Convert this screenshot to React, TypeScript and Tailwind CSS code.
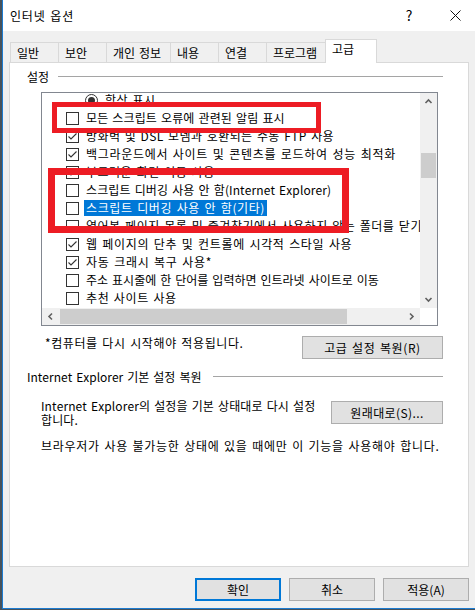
import React from 'react';

type Item = { label: string; kind: 'check' | 'radio'; checked: boolean; selected?: boolean; track: string };

const items: Item[] = [
  { label: '항상 표시', kind: 'radio', checked: true, track: 'tracking-[0.5px]' },
  { label: '모든 스크립트 오류에 관련된 알림 표시', kind: 'check', checked: false, track: 'tracking-[0.1px]' },
  { label: '방화벽 및 DSL 모뎀과 호환되는 수동 FTP 사용', kind: 'check', checked: true, track: 'tracking-[0.4px]' },
  { label: '백그라운드에서 사이트 및 콘텐츠를 로드하여 성능 최적화', kind: 'check', checked: true, track: 'tracking-[0.7px]' },
  { label: '부드러운 화면 이동 사용', kind: 'check', checked: true, track: 'tracking-[0.5px]' },
  { label: '스크립트 디버깅 사용 안 함(Internet Explorer)', kind: 'check', checked: false, track: 'tracking-[0.1px]' },
  { label: '스크립트 디버깅 사용 안 함(기타)', kind: 'check', checked: false, selected: true, track: 'tracking-[0.6px]' },
  { label: '열어본 페이지 목록 및 즐겨찾기에서 사용하지 않는 폴더를 닫기', kind: 'check', checked: false, track: 'tracking-[0.5px]' },
  { label: '웹 페이지의 단추 및 컨트롤에 시각적 스타일 사용', kind: 'check', checked: true, track: 'tracking-[0.65px]' },
  { label: '자동 크래시 복구 사용*', kind: 'check', checked: true, track: 'tracking-[0.7px]' },
  { label: '주소 표시줄에 한 단어를 입력하면 인트라넷 사이트로 이동', kind: 'check', checked: false, track: 'tracking-[0px]' },
  { label: '추천 사이트 사용', kind: 'check', checked: false, track: 'tracking-[0.6px]' },
];

const tabs = [
  { label: '일반', w: 'w-[48px]' },
  { label: '보안', w: 'w-[48px]' },
  { label: '개인 정보', w: 'w-[64px]' },
  { label: '내용', w: 'w-[48px]' },
  { label: '연결', w: 'w-[48px]' },
  { label: '프로그램', w: 'w-[59px]' },
];

function CheckBox({ checked }: { checked: boolean }) {
  return (
    <span className="w-[13px] h-[13px] border border-[#333333] bg-white flex items-center justify-center shrink-0">
      {checked && (
        <svg width="11" height="11" viewBox="0 0 11 11">
          <path d="M1.5 5.5 L4 8 L9.5 2.5" fill="none" stroke="#333333" strokeWidth="1.1" />
        </svg>
      )}
    </span>
  );
}

function Radio() {
  return (
    <span className="w-[13px] h-[13px] rounded-full border border-[#333333] bg-white flex items-center justify-center shrink-0">
      <span className="w-[7px] h-[7px] rounded-full bg-[#333333]" />
    </span>
  );
}

function Chevron({ dir }: { dir: 'up' | 'down' | 'left' | 'right' }) {
  const d = {
    up: 'M1.5 6 L4.5 3 L7.5 6',
    down: 'M1.5 3 L4.5 6 L7.5 3',
    left: 'M6 1.5 L3 4.5 L6 7.5',
    right: 'M3 1.5 L6 4.5 L3 7.5',
  }[dir];
  return (
    <svg width="9" height="9" viewBox="0 0 9 9">
      <path d={d} fill="none" stroke="#606060" strokeWidth="1.6" />
    </svg>
  );
}

function Button({ label, wide, primary, track = '' }: { label: string; wide: string; primary?: boolean; track?: string }) {
  return (
    <div
      className={`${wide} h-[23px] flex items-center justify-center bg-[#e1e1e1] text-[12px] leading-[14px] ${track} ${
        primary ? 'border-2 border-[#0078d7]' : 'border border-[#adadad]'
      }`}
    >
      {label}
    </div>
  );
}

export default function App() {
  return (
    <div className="relative w-[475px] h-[610px] overflow-hidden bg-[#46525c] font-['Noto_Sans_CJK_KR',sans-serif] text-black [font-kerning:none] [word-spacing:1.3px]">
      <div className="ml-[2px] w-[476px] h-[609px] border-l border-b border-[#1c7bd0] bg-[#f0f0f0] flex flex-col">
        {/* title bar */}
        <div className="h-[31px] bg-white flex items-center shrink-0">
          <span className="pl-[7px] text-[12px] leading-[14px] tracking-[0.8px]">인터넷 옵션</span>
          <div className="ml-auto flex h-full">
            <div className="w-[46px] h-full flex items-center justify-center text-[14px]">?</div>
            <div className="w-[46px] h-full flex items-center justify-center">
              <svg width="11" height="11" viewBox="0 0 11 11">
                <path d="M0.5 0.5 L10.5 10.5 M10.5 0.5 L0.5 10.5" stroke="#111" strokeWidth="1" />
              </svg>
            </div>
          </div>
        </div>

        {/* tabs */}
        <div className="mt-[8px] ml-[7px] h-[23px] flex items-end">
          {tabs.map((t) => (
            <div
              key={t.label}
              className={`${t.w} h-[20px] border-t border-l border-[#d9d9d9] flex items-center pl-[6px] text-[12px] leading-[14px] whitespace-nowrap`}
            >
              {t.label}
            </div>
          ))}
          <div className="relative z-10 w-[52px] h-[24px] -mb-px bg-white border border-b-0 border-[#d9d9d9] pl-[6px] pt-[2px] text-[12px] leading-[14px]">
            고급
          </div>
        </div>

        {/* panel */}
        <div className="ml-[6px] w-[460px] h-[505px] border border-[#d9d9d9] bg-white">
          <div className="ml-[17px] w-[416px]">
            <div className="mt-[6px] h-[15px] flex items-center">
              <span className="w-[31px] text-[12px] leading-[15px]">설정</span>
              <div className="flex-1 h-px bg-[#a5a5a5]" />
            </div>

            {/* list box */}
            <div className="mt-[8px] ml-[14px] w-[397px] h-[234px] border border-[#828790] grid grid-cols-[1fr_17px] grid-rows-[1fr_17px]">
              <div className="overflow-hidden bg-white">
                <div className="-mt-[2px]">
                  {items.map((it) => (
                    <div
                      key={it.label}
                      className={`h-[18px] flex items-center whitespace-nowrap ${it.kind === 'radio' ? 'pl-[43px]' : 'pl-[24px]'}`}
                    >
                      {it.kind === 'radio' ? <Radio /> : <CheckBox checked={it.checked} />}
                      <span
                        className={`ml-[5px] px-[2px] text-[12px] leading-[16px] ${it.track} ${
                          it.selected ? 'bg-[#0078d7] text-white' : ''
                        }`}
                      >
                        {it.label}
                      </span>
                    </div>
                  ))}
                </div>
              </div>
              {/* vertical scrollbar */}
              <div className="bg-[#f0f0f0] flex flex-col items-center">
                <div className="h-[17px] w-full flex items-center justify-center">
                  <Chevron dir="up" />
                </div>
                <div className="mt-[43px] h-[25px] w-[15px] bg-[#cdcdcd]" />
                <div className="flex-1" />
                <div className="h-[17px] w-full flex items-center justify-center">
                  <Chevron dir="down" />
                </div>
              </div>
              {/* horizontal scrollbar */}
              <div className="bg-[#f0f0f0] flex items-center">
                <div className="w-[17px] h-full flex items-center justify-center">
                  <Chevron dir="left" />
                </div>
                <div className="ml-[1px] w-[287px] h-[15px] bg-[#cdcdcd]" />
                <div className="flex-1" />
                <div className="w-[17px] h-full flex items-center justify-center">
                  <Chevron dir="right" />
                </div>
              </div>
              <div className="bg-white" />
            </div>

            <div className="mt-[10px] flex items-start justify-between">
              <span className="ml-[18px] text-[12px] leading-[14px] tracking-[0.6px]">*컴퓨터를 다시 시작해야 적용됩니다.</span>
              <Button label="고급 설정 복원(R)" wide="w-[141px]" track="tracking-[0.6px]" />
            </div>

            <div className="mt-[10px] h-[15px] flex items-center">
              <span className="w-[186px] text-[12px] leading-[15px] whitespace-nowrap">Internet Explorer 기본 설정 복원</span>
              <div className="flex-1 h-px bg-[#a5a5a5]" />
            </div>

            <div className="mt-[17px] flex items-start justify-between">
              <p className="ml-[14px] -mt-[2px] text-[12px] leading-[14px] tracking-[0.1px]">
                Internet Explorer의 설정을 기본 상태대로 다시 설정
                <br />
                합니다.
              </p>
              <Button label="원래대로(S)..." wide="w-[112px]" track="tracking-[0.4px]" />
            </div>

            <p className="mt-[12px] ml-[14px] text-[12px] leading-[14px] whitespace-nowrap tracking-[0.7px]">
              브라우저가 사용 불가능한 상태에 있을 때에만 이 기능을 사용해야 합니다.
            </p>
          </div>
        </div>

        {/* dialog buttons */}
        <div className="mt-[11px] ml-[192px] flex gap-[8px]">
          <Button label="확인" wide="w-[86px]" primary />
          <Button label="취소" wide="w-[86px]" />
          <Button label="적용(A)" wide="w-[86px]" />
        </div>
      </div>

      {/* red annotation boxes */}
      <div className="absolute left-[52px] top-[102px] w-[269px] h-[31px] border-[5px] border-[#ed1c24]" />
      <div className="absolute left-[48px] top-[168px] w-[301px] h-[65px] border-[7px] border-[#ed1c24]" />
    </div>
  );
}
